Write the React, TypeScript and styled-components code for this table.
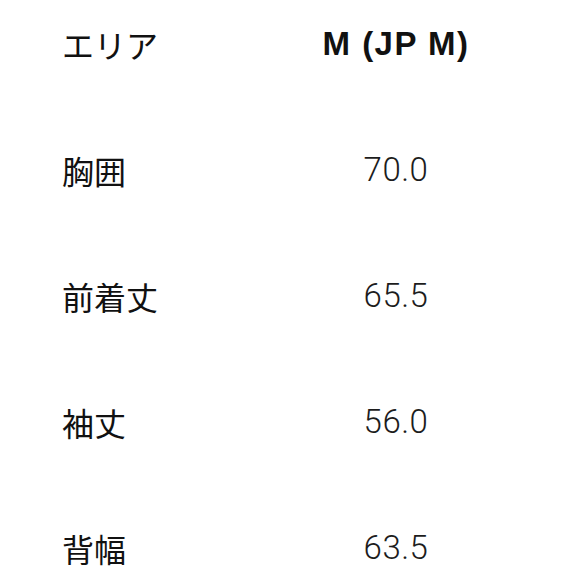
import { Fragment } from "react";
import styled, { createGlobalStyle } from "styled-components";

const GlobalStyle = createGlobalStyle`
  html, body {
    margin: 0;
    padding: 0;
    background: #ffffff;
  }
  body {
    font-family: "Liberation Sans", "Noto Sans CJK JP", sans-serif;
    color: #111111;
  }
`;

const SizeTable = styled.div`
  display: grid;
  grid-template-columns: 254px 160px;
  grid-template-rows: 42px;
  grid-auto-rows: 40px;
  row-gap: 86px;
  padding: 22px 0 0 62px;
  width: 582px;
  height: 582px;
  box-sizing: border-box;
  overflow: hidden;
`;

const Cell = styled.div<{ $align?: "left" | "center" }>`
  display: flex;
  align-items: center;
  justify-content: ${(p) => (p.$align === "center" ? "center" : "flex-start")};
  line-height: 40px;
  white-space: nowrap;
`;

const Area = styled(Cell)`
  font-family: "Noto Sans CJK JP", sans-serif;
  font-size: 32px;
  font-weight: 400;
  color: #111111;
`;

const HeadArea = styled(Area)`
  align-items: flex-end;
`;

const HeadSize = styled(Cell)`
  align-items: flex-end;
  font-family: "Liberation Sans", Arial, sans-serif;
  font-size: 33px;
  font-weight: 700;
  letter-spacing: 1.5px;
  color: #111111;
`;

const Value = styled(Cell)`
  font-family: Roboto, "Liberation Sans", sans-serif;
  font-size: 33px;
  font-weight: 300;
  letter-spacing: 0.5px;
  color: #1c1c1c;
`;

const rows: [string, string][] = [
  ["胸囲", "70.0"],
  ["前着丈", "65.5"],
  ["袖丈", "56.0"],
  ["背幅", "63.5"],
];

export default function App() {
  return (
    <>
      <GlobalStyle />
      <SizeTable>
        <HeadArea>エリア</HeadArea>
        <HeadSize $align="center">M (JP M)</HeadSize>
        {rows.map(([area, value]) => (
          <Fragment key={area}>
            <Area>{area}</Area>
            <Value $align="center">{value}</Value>
          </Fragment>
        ))}
      </SizeTable>
    </>
  );
}
